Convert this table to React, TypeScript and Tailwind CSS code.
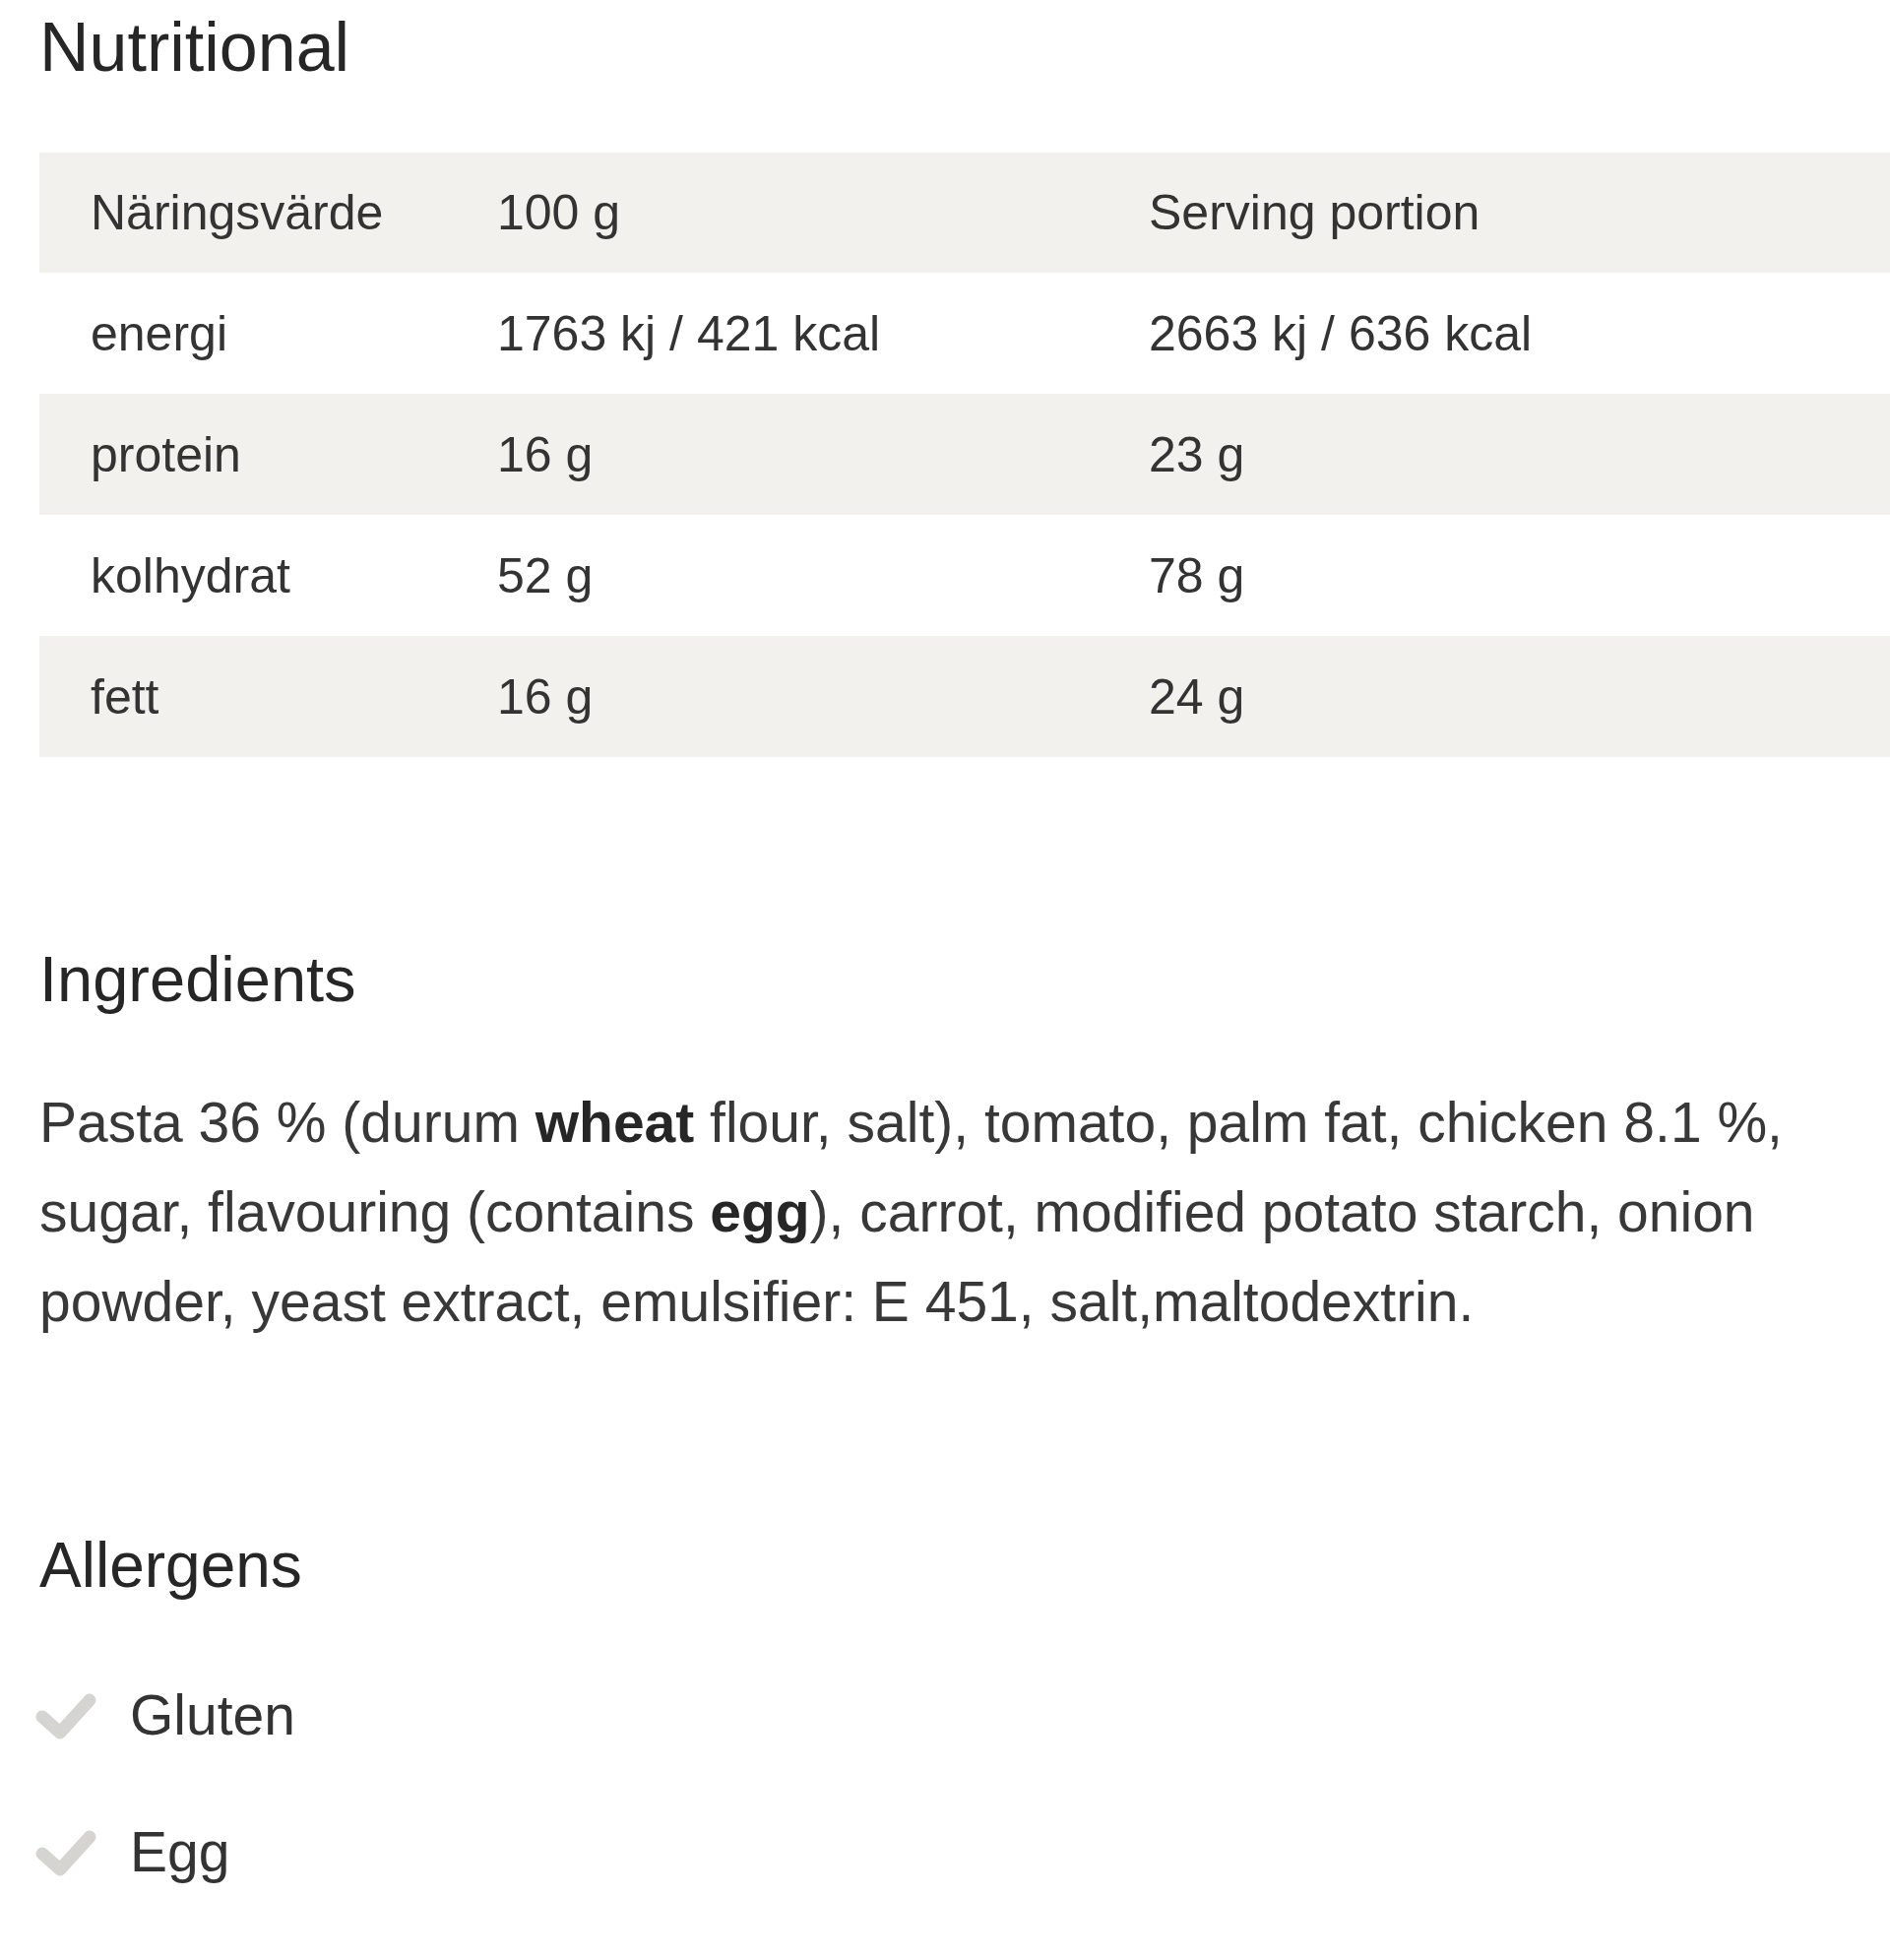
const rows = [
  { name: 'energi', per100: '1763 kj / 421 kcal', serving: '2663 kj / 636 kcal' },
  { name: 'protein', per100: '16 g', serving: '23 g' },
  { name: 'kolhydrat', per100: '52 g', serving: '78 g' },
  { name: 'fett', per100: '16 g', serving: '24 g' },
]

const allergens = ['Gluten', 'Egg']

function Check() {
  return (
    <svg width="64" height="56" viewBox="0 0 64 56" fill="none" className="-ml-[6px] shrink-0">
      <polyline
        points="9,29 27,45 57,12"
        stroke="#d5d4d0"
        strokeWidth="13"
        strokeLinecap="round"
        strokeLinejoin="round"
      />
    </svg>
  )
}

function Row({ cells, index }: { cells: string[]; index: number }) {
  const shaded = index % 2 === 0
  return (
    <div
      className={`grid grid-cols-[413px_662px_1fr] items-center ${
        index === 0 ? 'h-[122px]' : 'h-[123px]'
      } ${shaded ? 'bg-[#f2f1ed]' : 'bg-white'}`}
    >
      {cells.map((c, i) => (
        <div key={i} className="pl-[52px] text-[50px] leading-none text-[#333333] whitespace-nowrap">
          {c}
        </div>
      ))}
    </div>
  )
}

export default function App() {
  return (
    <div className="min-h-[1991px] bg-white pl-[40px] font-['Liberation_Sans',Arial,sans-serif] text-[#2e2e2e]">
      {/* Nutritional */}
      <h2 className="pt-[13px] text-[70px] leading-none text-[#262626]">Nutritional</h2>

      <div className="mt-[72px]">
        <Row index={0} cells={['Näringsvärde', '100 g', 'Serving portion']} />
        {rows.map((r, i) => (
          <Row key={r.name} index={i + 1} cells={[r.name, r.per100, r.serving]} />
        ))}
      </div>

      {/* Ingredients */}
      <h2 className="mt-[193px] text-[65px] leading-none text-[#262626]">Ingredients</h2>
      <p className="mt-[68px] text-[57px] leading-[91px] text-[#383838]">
        Pasta 36 % (durum <b className="font-bold text-[#262626]">wheat</b> flour, salt), tomato, palm fat,
        chicken 8.1 %, sugar, flavouring (contains <b className="font-bold text-[#262626]">egg</b>), carrot,
        modified potato starch, onion powder, yeast extract, emulsifier: E 451, salt,maltodextrin.
      </p>

      {/* Allergens */}
      <h2 className="mt-[190px] text-[64px] leading-none text-[#262626]">Allergens</h2>
      <ul className="mt-[92px] flex flex-col gap-[82px]">
        {allergens.map((a) => (
          <li key={a} className="flex items-center gap-[34px]">
            <Check />
            <span className="text-[57px] leading-none text-[#333333]">{a}</span>
          </li>
        ))}
      </ul>
    </div>
  )
}
